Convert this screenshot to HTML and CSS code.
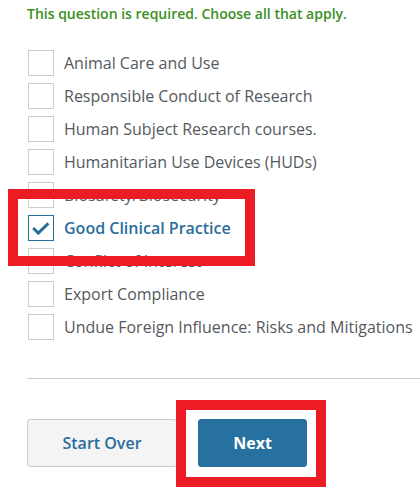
FILE: index.html
```html
<!DOCTYPE html>
<html>
<head>
<meta charset="utf-8">
<link rel="stylesheet" href="styles.css">
</head>
<body>
<div class="page">
  <p class="hint">This question is required. Choose all that apply.</p>
  <ul class="options">
    <li class="option"><span class="box"></span><span class="label">Animal Care and Use</span></li>
    <li class="option"><span class="box"></span><span class="label">Responsible Conduct of Research</span></li>
    <li class="option"><span class="box"></span><span class="label">Human Subject Research courses.</span></li>
    <li class="option"><span class="box"></span><span class="label">Humanitarian Use Devices (HUDs)</span></li>
    <li class="option"><span class="box"></span><span class="label">Biosafety/Biosecurity</span></li>
    <li class="option checked"><span class="box"><svg viewBox="0 0 26 26" width="24" height="24" class="tick"><path d="M4.5 13 L10 18.5 L21 8" fill="none" stroke="#2a6e9b" stroke-width="3.2"/></svg></span><span class="label">Good Clinical Practice</span></li>
    <li class="option"><span class="box"></span><span class="label">Conflict of Interest</span></li>
    <li class="option"><span class="box"></span><span class="label">Export Compliance</span></li>
    <li class="option"><span class="box"></span><span class="label">Undue Foreign Influence: Risks and Mitigations</span></li>
  </ul>
  <hr class="divider">
  <div class="actions">
    <button class="btn btn-secondary">Start Over</button>
    <button class="btn btn-primary">Next</button>
  </div>
</div>
<div class="highlight highlight-option"></div>
<div class="highlight highlight-next"></div>
</body>
</html>
```
FILE: styles.css
```css
html, body {
  margin: 0;
  padding: 0;
  background: #fff;
}
body {
  font-family: "Open Sans", "Liberation Sans", sans-serif;
  width: 420px;
  height: 493px;
  overflow: hidden;
  position: relative;
}
.page {
  padding-left: 27px;
}
.hint {
  margin: 0;
  padding-top: 4px;
  font-size: 14px;
  line-height: 20px;
  font-weight: 600;
  color: #3b8f1e;
}
.options {
  list-style: none;
  margin: 26px 0 0 0;
  padding: 0 0 0 1px;
}
.option {
  display: flex;
  align-items: center;
  height: 26px;
  margin-bottom: 7px;
}
.box {
  box-sizing: border-box;
  width: 26px;
  height: 26px;
  border: 1px solid #cccccc;
  background: #fff;
  flex: none;
  display: flex;
  align-items: center;
  justify-content: center;
}
.label {
  margin-left: 10px;
  font-size: 16px;
  color: #545960;
  white-space: nowrap;
}
.checked .box {
  border-color: #2a6e9b;
}
.checked .label {
  color: #2a6e9b;
  font-weight: 600;
}
.divider {
  border: 0;
  border-top: 1px solid #cccccc;
  margin: 38px 0 0 0;
}
.actions {
  display: flex;
  gap: 21px;
  margin-top: 40px;
}
.btn {
  height: 48px;
  border-radius: 3px;
  font-family: "Open Sans", "Liberation Sans", sans-serif;
  font-size: 16px;
  font-weight: 700;
  cursor: pointer;
}
.btn-secondary {
  width: 150px;
  background: #f4f4f4;
  border: 1px solid #cccccc;
  color: #2a6e9b;
  font-weight: 600;
}
.btn-primary {
  width: 109px;
  background: #26719f;
  border: 1px solid #26719f;
  color: #ffffff;
}
.highlight {
  position: absolute;
  box-sizing: border-box;
  border: 10px solid #ed1c24;
  background: transparent;
}
.highlight-option {
  left: 8px;
  top: 189px;
  width: 247px;
  height: 77px;
}
.highlight-next {
  left: 176px;
  top: 400px;
  width: 150px;
  height: 87px;
}
```
